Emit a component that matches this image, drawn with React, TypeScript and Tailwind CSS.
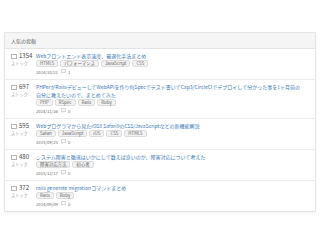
import React from 'react'

interface Post {
  stock: number
  title: string[]
  tags: string[]
  date: string
  comments: number
}

const posts: Post[] = [
  {
    stock: 1354,
    title: ['Webフロントエンド表示速度、最適化手法まとめ'],
    tags: ['HTML5', 'パフォーマンス', 'JavaScript', 'CSS'],
    date: '2014/10/21',
    comments: 1,
  },
  {
    stock: 697,
    title: [
      'PHPerがRailsデビューしてWebAPIを作り何Specでテスト書いてCap3/CircleCIでデプロイして分かった事を1ヶ月前の',
      '自分に教えたいので、まとめてみた',
    ],
    tags: ['PHP', 'RSpec', 'Rails', 'Ruby'],
    date: '2014/11/26',
    comments: 0,
  },
  {
    stock: 595,
    title: ['Webプログラマから見たiOS8 Safari9のCSS/JavaScriptなどの新機能解説'],
    tags: ['Safari', 'JavaScript', 'iOS', 'CSS', 'HTML5'],
    date: '2015/09/25',
    comments: 0,
  },
  {
    stock: 480,
    title: ['システム障害と徹退はいかにして数えば良いのか、障害対応について考えた'],
    tags: ['障害対応方法', '初心者'],
    date: '2015/12/17',
    comments: 0,
  },
  {
    stock: 372,
    title: ['rails generate migrationコマンドまとめ'],
    tags: ['Rails', 'Ruby'],
    date: '2014/09/09',
    comments: 0,
  },
]

const font = { fontFamily: '"Noto Sans CJK JP", "Liberation Sans", sans-serif' }

function Box() {
  return <span className="inline-block h-[5px] w-[6px] border border-[#b5b5b5]" />
}

function Bubble() {
  return (
    <svg width="5" height="5" viewBox="0 0 6 6" className="text-[#b0b0b0]">
      <path d="M0.5 0.5h5v3.5h-3l-1.5 1.2v-1.2h-0.5z" fill="none" stroke="currentColor" strokeWidth="0.7" />
    </svg>
  )
}

function Row({ post, last }: { post: Post; last: boolean }) {
  return (
    <div className={`flex pl-[6px] pt-[3px] pb-[3px] ${last ? '' : 'border-b border-[#ebebeb]'}`}>
      <div className="w-[25px] shrink-0">
        <div className="flex h-[8px] items-center gap-[2px]">
          <Box />
          <span className="text-[6px] leading-[8px] text-[#444]">{post.stock}</span>
        </div>
        <div className="text-[4.2px] leading-[7px] text-[#999]">ストック</div>
      </div>
      <div className="min-w-0 flex-1">
        {post.title.map((t) => (
          <div key={t} className="whitespace-nowrap text-[5px] leading-[8px] text-[#3a78b5]">
            {t}
          </div>
        ))}
        <div className="flex h-[7px] items-center gap-[2px]">
          {post.tags.map((tag) => (
            <span
              key={tag}
              className="rounded-[2px] border border-[#dcdcdc] bg-[#f2f2f2] px-[3px] text-[4.4px] leading-[5px] text-[#666]"
            >
              {tag}
            </span>
          ))}
        </div>
        <div className="mt-[1px] flex h-[8px] items-center gap-[3px] text-[4.2px] text-[#666]">
          <span>{post.date}</span>
          <span className="flex items-center gap-[2px]">
            <Bubble />
            {post.comments}
          </span>
        </div>
      </div>
    </div>
  )
}

export default function App() {
  return (
    <div className="h-[240px] w-[320px] bg-white pt-[32px]" style={font}>
      <div className="mx-[4px] w-[312px] border border-[#e5e5e5] shadow-[0_1px_2px_rgba(0,0,0,0.06)]">
        <div className="border-b border-[#e3e3e3] bg-[#f5f5f5] px-[6px] py-[4px] text-[5px] leading-[7px] text-[#555]">
          人気の投稿
        </div>
        {posts.map((p, i) => (
          <Row key={p.stock} post={p} last={i === posts.length - 1} />
        ))}
      </div>
    </div>
  )
}
